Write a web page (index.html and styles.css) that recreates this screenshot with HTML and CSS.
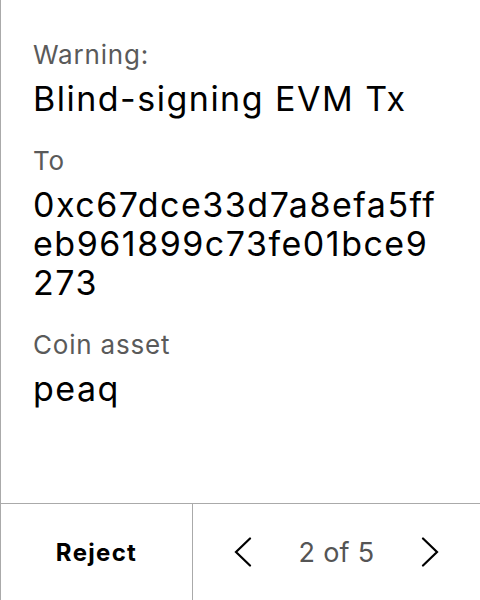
FILE: index.html
```html
<!DOCTYPE html>
<html lang="en">
<head>
<meta charset="utf-8">
<title>Blind-signing EVM Tx</title>
<link rel="stylesheet" href="styles.css">
</head>
<body>
<div class="screen">
  <main class="content">
    <section class="field">
      <div class="label">Warning:</div>
      <div class="value">Blind-signing EVM Tx</div>
    </section>
    <section class="field">
      <div class="label">To</div>
      <div class="value address">0xc67dce33d7a8efa5ffeb961899c73fe01bce9273</div>
    </section>
    <section class="field">
      <div class="label">Coin asset</div>
      <div class="value">peaq</div>
    </section>
  </main>
  <footer class="footer">
    <button class="reject" type="button">Reject</button>
    <div class="pager">
      <button class="chev" type="button" aria-label="Previous">
        <svg width="18" height="30" viewBox="0 0 18 30"><path d="M16 1.5 L2 15 L16 28.5" fill="none" stroke="#000" stroke-width="2.2" stroke-linecap="round" stroke-linejoin="miter"/></svg>
      </button>
      <span class="count">2 of 5</span>
      <button class="chev" type="button" aria-label="Next">
        <svg width="18" height="30" viewBox="0 0 18 30"><path d="M2 1.5 L16 15 L2 28.5" fill="none" stroke="#000" stroke-width="2.2" stroke-linecap="round" stroke-linejoin="miter"/></svg>
      </button>
    </div>
  </footer>
</div>
</body>
</html>
```

FILE: styles.css
```css
html, body {
  margin: 0;
  padding: 0;
  background: #fff;
}
body {
  font-family: Inter, "Noto Sans", "Liberation Sans", sans-serif;
  color: #000;
}
.screen {
  width: 480px;
  height: 600px;
  box-sizing: border-box;
  border-left: 1px solid #aaa;
  display: flex;
  flex-direction: column;
}
.content {
  flex: 1;
  padding: 39px 36px 0 32px;
  display: flex;
  flex-direction: column;
  gap: 27px;
}
.field {
  display: flex;
  flex-direction: column;
  gap: 8px;
}
.label {
  font-size: 26px;
  line-height: 32px;
  letter-spacing: 0.8px;
  color: #5a5a5a;
}
.value {
  font-size: 34px;
  line-height: 39px;
  letter-spacing: 1.5px;
  color: #000;
}
.address {
  word-break: break-all;
}
.footer {
  height: 96px;
  border-top: 1px solid #aaa;
  display: flex;
}
.reject {
  width: 192px;
  border: none;
  border-right: 1px solid #aaa;
  background: none;
  font-family: inherit;
  font-size: 24px;
  font-weight: 700;
  letter-spacing: 1.3px;
  color: #000;
  padding: 0;
}
.pager {
  flex: 1;
  display: flex;
  align-items: center;
  justify-content: space-between;
  padding: 0 41px;
}
.chev {
  border: none;
  background: none;
  padding: 0;
  display: flex;
}
.count {
  font-size: 27px;
  letter-spacing: 0.3px;
  color: #555;
}
```
